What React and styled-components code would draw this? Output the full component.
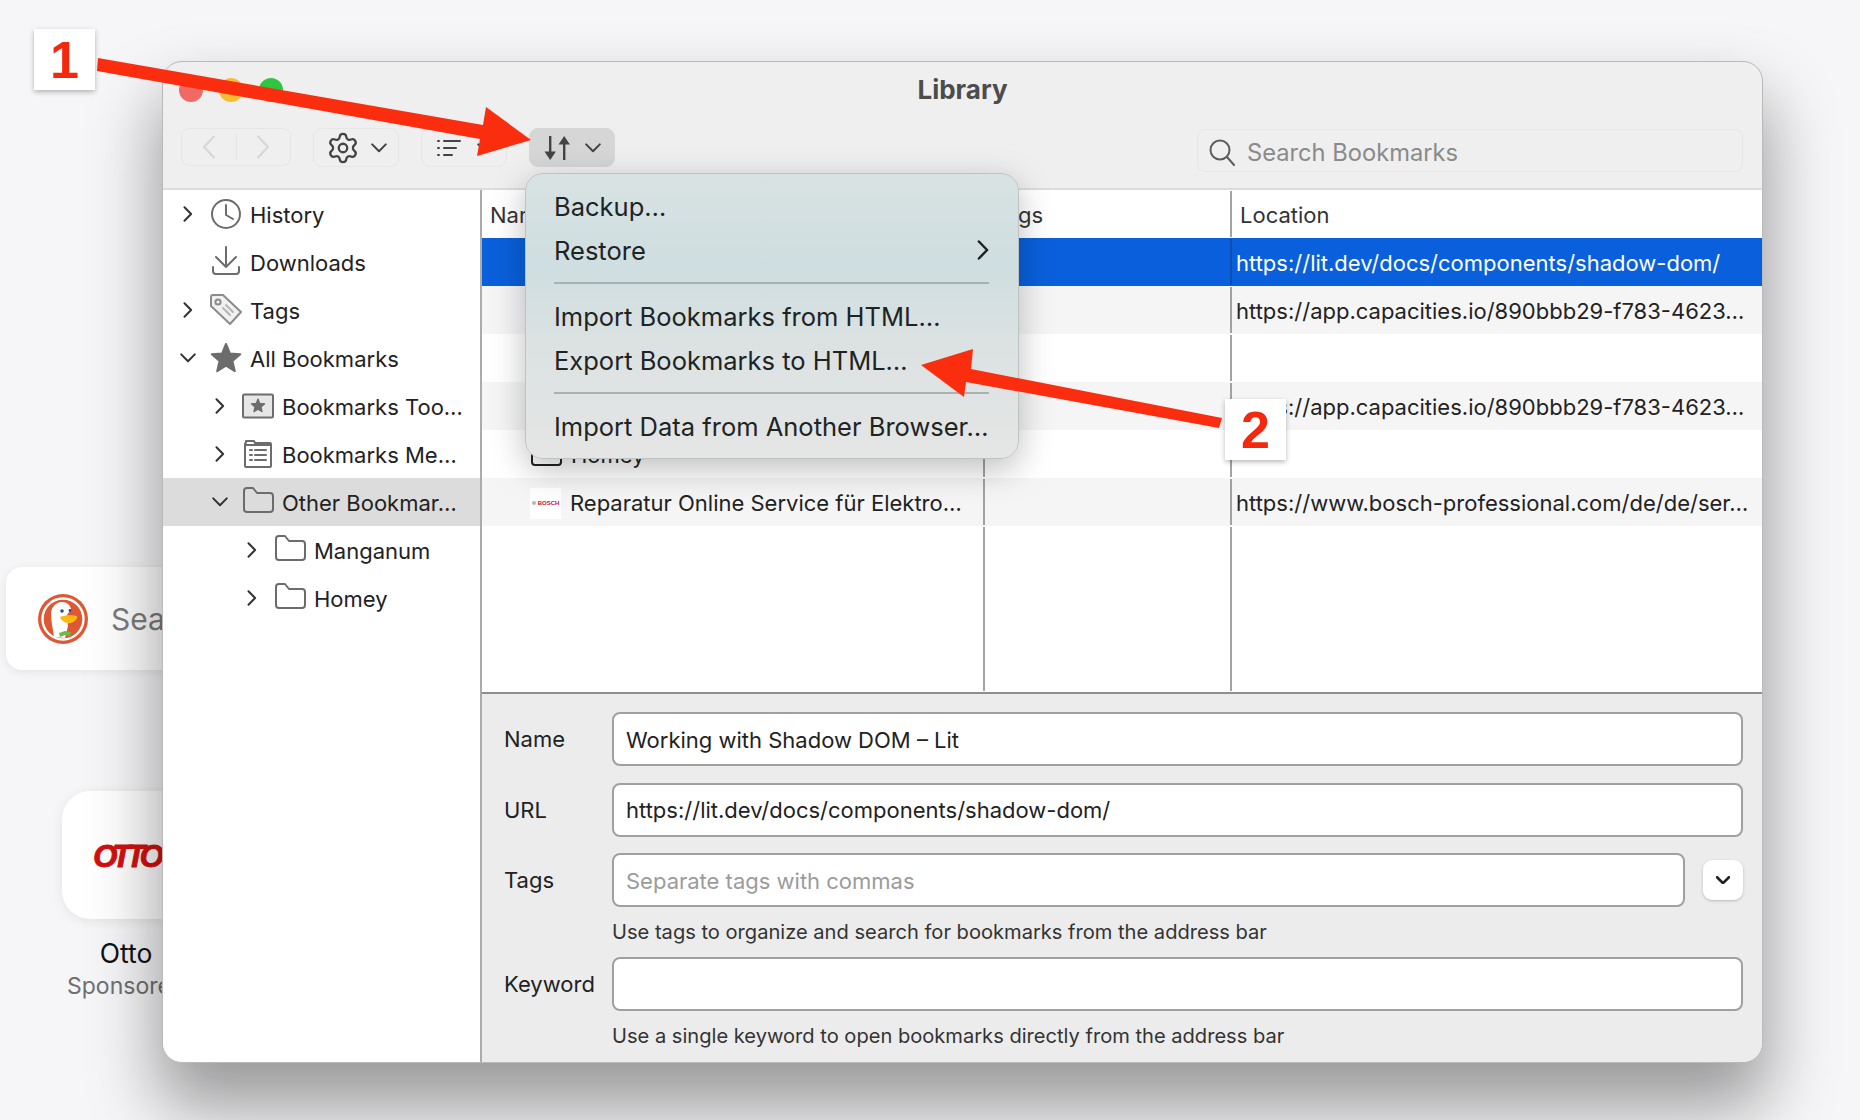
import React from "react"
import styled, { createGlobalStyle } from "styled-components"
import { Settings } from "lucide-react"

const GlobalStyle = createGlobalStyle`
	html, body {
		margin: 0;
		padding: 0;
		background: #f6f6f8;
	}
	* {
		box-sizing: border-box;
	}
`

const Desktop = styled.div`
	position: relative;
	width: 1860px;
	height: 1120px;
	overflow: hidden;
	background: #f6f6f8;
	font-family: Inter, "Liberation Sans", sans-serif;
	color: #222;
`

const Backdrop = styled.div`
	display: flex;
	flex-direction: column;
	align-items: flex-start;
	padding: 567px 0 0 6px;
`

const SearchCard = styled.div`
	display: flex;
	align-items: center;
	gap: 23px;
	width: 600px;
	height: 103px;
	padding-left: 32px;
	border-radius: 16px;
	background: #fff;
	box-shadow: 0 2px 10px rgba(0, 0, 0, 0.08);
	font-size: 30px;
	color: #7c7c7c;
`

const TileGroup = styled.div`
	display: flex;
	flex-direction: column;
	align-items: center;
	width: 128px;
	margin: 121px 0 0 56px;
`

const Tile = styled.div`
	display: flex;
	align-items: center;
	justify-content: center;
	width: 128px;
	height: 128px;
	padding-top: 4px;
	border-radius: 28px;
	background: #fff;
	box-shadow: 0 2px 12px rgba(0, 0, 0, 0.08);
`

const OttoLogo = styled.span`
	font-family: "Liberation Sans", sans-serif;
	font-size: 31px;
	font-weight: 700;
	font-style: italic;
	letter-spacing: -5px;
	color: #d3100f;
	-webkit-text-stroke: 1px #d3100f;
`

const TileName = styled.div`
	margin-top: 19px;
	font-size: 26.5px;
	line-height: 30px;
	color: #111;
`

const TileNote = styled.div`
	margin-top: 3px;
	font-size: 23px;
	line-height: 30px;
	color: #707070;
	white-space: nowrap;
`

const Window = styled.div`
	position: absolute;
	left: 162px;
	top: 61px;
	display: flex;
	flex-direction: column;
	width: 1601px;
	height: 1002px;
	border: 1px solid #b9b9b9;
	border-radius: 20px;
	background: #efefef;
	box-shadow: 0 40px 68px 4px rgba(0, 0, 0, 0.38);
`

const Clip = styled.div`
	display: flex;
	flex-direction: column;
	flex: 1;
	min-height: 0;
	overflow: hidden;
	border-radius: 19px;
`

const TitleRow = styled.div`
	display: grid;
	grid-template-columns: 1fr auto 1fr;
	align-items: center;
	height: 55px;
	padding: 0 16px;
`

const Lights = styled.div`
	display: flex;
	gap: 16px;
`

const Light = styled.span`
	width: 24px;
	height: 24px;
	border-radius: 50%;
	background: ${(p) => p.$color};
`

const Title = styled.div`
	font-size: 26px;
	font-weight: 700;
	color: #4c4c4c;
`

const Toolbar = styled.div`
	display: flex;
	align-items: flex-start;
	gap: 22px;
	height: 73px;
	padding: 11px 19px 0 18px;
	border-bottom: 2px solid #dcdcdc;
`

const NavGroup = styled.div`
	display: flex;
	align-items: center;
	width: 110px;
	height: 38px;
	border: 1px solid #e6e6e6;
	border-radius: 8px;
`

const NavHalf = styled.div`
	display: flex;
	align-items: center;
	justify-content: center;
	flex: 1;
	height: 26px;
	border-left: ${(p) => (p.$divided ? "1px solid #e4e4e4" : "none")};
`

const FlipX = styled.span`
	display: flex;
	transform: scaleX(-1);
`

const ToolButton = styled.div`
	display: flex;
	align-items: center;
	justify-content: center;
	gap: ${(p) => p.$gap}px;
	width: 86px;
	height: 39px;
	padding-top: 1px;
	border: 1px solid ${(p) => (p.$active ? "#d6d6d6" : "#e6e6e6")};
	border-radius: 9px;
	background: ${(p) => (p.$active ? "#d6d6d6" : "transparent")};
	color: #444;
`

const SearchBox = styled.div`
	display: flex;
	align-items: center;
	gap: 11px;
	width: 546px;
	height: 43px;
	margin: 1px 0 0 auto;
	padding: 3px 0 0 10px;
	border: 1px solid #e6e6e6;
	border-radius: 8px;
	font-size: 23.7px;
	color: #8a8a8a;
`

const Body = styled.div`
	display: flex;
	flex: 1;
	min-height: 0;
`

const Sidebar = styled.div`
	flex: none;
	width: 319px;
	border-right: 2px solid #ababab;
	background: #fff;
`

const TreeRow = styled.div`
	display: flex;
	align-items: center;
	height: 48px;
	padding-left: ${(p) => 16 + p.$level * 32}px;
	background: ${(p) => (p.$selected ? "#dcdcdc" : "transparent")};
	font-size: 22px;
	white-space: nowrap;
`

const TreeLabel = styled.span`
	padding-top: 2px;
`

const Twisty = styled.span`
	display: flex;
	align-items: center;
	justify-content: center;
	flex: none;
	width: 18px;
	height: 18px;
	margin-right: 13px;
	color: #333;
`

const IconSlot = styled.span`
	display: flex;
	flex: none;
	width: 32px;
	height: 32px;
	margin-right: 8px;
	color: #6c6c6c;
`

const Main = styled.div`
	display: flex;
	flex-direction: column;
	flex: 1;
	min-width: 0;
`

const Table = styled.div`
	display: flex;
	flex-direction: column;
	flex: 1;
	min-height: 0;
	background: #fff;
	border-bottom: 2px solid #8e8e8e;
`

const Row = styled.div`
	display: grid;
	grid-template-columns: 501px 247px 1fr;
	flex: ${(p) => (p.$fill ? 1 : "none")};
	height: ${(p) => (p.$fill ? "auto" : "48px")};
	background: ${(p) => (p.$selected ? "#0a60dc" : p.$striped ? "#f5f5f5" : "#fff")};
	color: ${(p) => (p.$selected ? "#fff" : "#222")};
	font-size: 22px;
`

const Cell = styled.div`
	display: flex;
	align-items: center;
	gap: 9px;
	min-width: 0;
	margin: 1px 0;
	padding: 2px 0 0 ${(p) => p.$inset || 4}px;
	border-left: ${(p) => (p.$first ? "none" : `2px solid ${p.$selected ? "#0c4fb0" : "#a3a3a3"}`)};
	white-space: nowrap;
`

const HeadCell = styled(Cell)`
	color: #333;
`

const Favicon = styled.span`
	display: flex;
	align-items: center;
	justify-content: center;
	gap: 2px;
	flex: none;
	width: 31px;
	height: 31px;
	background: #fff;
	font-family: "Liberation Sans", sans-serif;
	font-size: 6px;
	font-weight: 700;
	color: #c8102e;
`

const FaviconDot = styled.i`
	width: 4px;
	height: 4px;
	border-radius: 50%;
	background: #b5b5b5;
`

const Details = styled.div`
	flex: none;
	height: 368px;
	padding: 18px 19px 0 22px;
	background: #ececec;
`

const FieldRow = styled.div`
	display: flex;
	align-items: center;
	margin-bottom: ${(p) => (p.$tight ? 0 : 16.5)}px;
`

const FieldLabel = styled.div`
	flex: none;
	width: 108px;
	font-size: 22px;
	color: #222;
`

const Field = styled.div`
	display: flex;
	align-items: center;
	flex: 1;
	height: 54px;
	padding: 1px 0 0 12px;
	border: 2px solid #a0a0a0;
	border-radius: 8px;
	background: #fff;
	font-size: 22px;
	color: ${(p) => (p.$placeholder ? "#9b9b9b" : "#222")};
`

const DropButton = styled.div`
	display: flex;
	align-items: center;
	justify-content: center;
	flex: none;
	width: 40px;
	height: 40px;
	margin-left: 18px;
	border-radius: 9px;
	background: #fff;
	box-shadow: 0 1px 3px rgba(0, 0, 0, 0.22);
`

const Hint = styled.div`
	height: 50px;
	padding-left: 108px;
	font-size: 20.1px;
	line-height: 51px;
	color: #333;
`

const Menu = styled.div`
	position: absolute;
	left: 362px;
	top: 111px;
	width: 494px;
	height: 286px;
	padding: 11px 29px 0 28px;
	border: 1px solid #bdc3c3;
	border-radius: 18px;
	background: linear-gradient(180deg, #d8e2e2 0%, #cfdee0 32%, #dce2e2 62%, #e5e5e5 100%);
	box-shadow: 0 10px 34px rgba(0, 0, 0, 0.26);
`

const MenuItem = styled.div`
	display: flex;
	align-items: center;
	justify-content: space-between;
	height: 44px;
	padding-bottom: 2px;
	font-size: 25.5px;
	color: #1e2424;
	white-space: nowrap;
`

const MenuRule = styled.div`
	height: 2px;
	margin: 9px 0 11px;
	background: #a9b2b2;
`

const ArrowLayer = styled.svg`
	position: absolute;
	left: 0;
	top: 0;
	pointer-events: none;
`

const Badge = styled.div`
	position: absolute;
	left: ${(p) => p.$x}px;
	top: ${(p) => p.$y}px;
	display: flex;
	align-items: center;
	justify-content: center;
	width: 61px;
	height: 61px;
	background: #fff;
	box-shadow: 0 2px 5px rgba(0, 0, 0, 0.28);
	font-family: "Liberation Sans", sans-serif;
	font-size: 52px;
	font-weight: 700;
	color: #f4280f;
`

const ChevronRight = ({ color = "currentColor", h = 16 }) => (
	<svg width={h * 0.6} height={h} viewBox="0 0 9 16" fill="none" stroke={color} strokeWidth="2" strokeLinecap="round" strokeLinejoin="round">
		<path d="M1.2 1.2 7.8 8l-6.6 6.8" />
	</svg>
)

const ChevronLeft = ({ color }) => (
	<svg width="14" height="24" viewBox="0 0 14 24" fill="none" stroke={color} strokeWidth="2" strokeLinecap="round" strokeLinejoin="round">
		<path d="M12 1.5 2 12l10 10.5" />
	</svg>
)

const ChevronDown = ({ w = 16, weight = 2 }) => (
	<svg width={w} height={w * 0.6} viewBox="0 0 16 9.6" fill="none" stroke="currentColor" strokeWidth={weight} strokeLinecap="round" strokeLinejoin="round">
		<path d="M1.2 1.4 8 8.2l6.8-6.8" />
	</svg>
)

const Glyph = ({ children, fill = "none" }) => (
	<svg width="32" height="32" viewBox="0 0 32 32" fill={fill} stroke="currentColor" strokeWidth="2" strokeLinecap="round" strokeLinejoin="round">
		{children}
	</svg>
)

const starPoints = (cx, cy, R) => {
	const pts = []
	for (let i = 0; i < 10; i++) {
		const r = i % 2 ? R * 0.45 : R
		const a = (Math.PI / 5) * i - Math.PI / 2
		pts.push(`${(cx + r * Math.cos(a)).toFixed(2)},${(cy + r * Math.sin(a)).toFixed(2)}`)
	}
	return pts.join(" ")
}

const ClockIcon = () => (
	<Glyph>
		<circle cx="16" cy="16" r="14" />
		<path d="M16 7v10l7 4" />
	</Glyph>
)

const DownloadIcon = () => (
	<Glyph>
		<path d="M16 1v20M6 11l10 10 10-10" />
		<path d="M3 21v4a3 3 0 0 0 3 3h20a3 3 0 0 0 3-3v-4" />
	</Glyph>
)

const TagIcon = () => (
	<svg width="32" height="32" viewBox="0 0 32 32" fill="#f1f1f1" stroke="#8b8b8b" strokeWidth="2" strokeLinejoin="round" strokeLinecap="round">
		<path d="M3 1h10l18 17-11 12L1 12V3a2 2 0 0 1 2-2Z" />
		<circle cx="8" cy="8" r="2.6" />
		<path d="M13 14l7 7M16 11l7 7" stroke="#b5b5b5" />
	</svg>
)

const StarIcon = () => (
	<Glyph fill="currentColor">
		<polygon points={starPoints(16, 17, 15)} />
	</Glyph>
)

const ToolbarBoxIcon = () => (
	<Glyph>
		<rect x="1" y="4.5" width="30" height="23" rx="1.5" fill="#e6e6e6" />
		<polygon points={starPoints(16, 16, 7)} fill="currentColor" stroke="currentColor" strokeWidth="1.2" />
	</Glyph>
)

const MenuBoxIcon = () => (
	<Glyph>
		<path d="M4 5V3h8l1 2h15a1 1 0 0 1 1 1v22a1 1 0 0 1-1 1H4a1 1 0 0 1-1-1V6a1 1 0 0 1 1-1Z" />
		<path d="M3 7h26" />
		<path d="M8 12h2M13 12h11M8 17h2M13 17h11M8 22h2M13 22h11" />
	</Glyph>
)

const FolderIcon = () => (
	<Glyph>
		<path d="M2 7V5a3 3 0 0 1 3-3h6l4 5h13a3 3 0 0 1 3 3v13a3 3 0 0 1-3 3H5a3 3 0 0 1-3-3Z" />
	</Glyph>
)

const ListIcon = () => (
	<svg width="26" height="18" viewBox="0 0 26 18" fill="none" stroke="currentColor" strokeWidth="2" strokeLinecap="round">
		<path d="M2 2h1M8 2h16M2 9h1M8 9h12M2 16h1M8 16h8" />
	</svg>
)

const SortIcon = () => (
	<svg width="26" height="26" viewBox="0 0 26 26" fill="currentColor">
		<path d="M5 1h2.4v17H5Z" />
		<path d="M0.5 16.5h11.4L6.2 25Z" />
		<path d="M19 8h2.4v17H19Z" />
		<path d="M14.5 9.5h11.4L20.2 1Z" />
	</svg>
)

const SearchGlyph = () => (
	<svg width="28" height="28" viewBox="0 0 28 28" fill="none" stroke="#5d5d5d" strokeWidth="2" strokeLinecap="round">
		<circle cx="12" cy="12" r="9.5" />
		<path d="M19 19l7 8" />
	</svg>
)

const DuckLogo = () => (
	<svg width="50" height="50" viewBox="0 0 50 50">
		<circle cx="25" cy="25" r="25" fill="#de5833" />
		<circle cx="25" cy="25" r="20.5" fill="none" stroke="#fff" strokeWidth="2.4" />
		<path d="M16 43c-1-8-3-16-3-23 0-7 5-12 11-12 5 0 8 3 9 7l-4 6 1 11-3 12Z" fill="#fff" />
		<circle cx="24" cy="17" r="1.8" fill="#2d4f8e" />
		<circle cx="32" cy="16.5" r="1.4" fill="#2d4f8e" />
		<path d="M22 23c4-2 12-2 17-1 1 3-3 6-6 7-4 1-10-2-11-6Z" fill="#fdb813" />
		<path d="M21 39l6-2 6 1-1 4-5-1-5 2Z" fill="#67bd47" />
	</svg>
)

const tree = [
	{ level: 0, open: false, icon: <ClockIcon />, label: "History" },
	{ level: 0, icon: <DownloadIcon />, label: "Downloads" },
	{ level: 0, open: false, icon: <TagIcon />, label: "Tags" },
	{ level: 0, open: true, icon: <StarIcon />, label: "All Bookmarks" },
	{ level: 1, open: false, icon: <ToolbarBoxIcon />, label: "Bookmarks Too…" },
	{ level: 1, open: false, icon: <MenuBoxIcon />, label: "Bookmarks Me…" },
	{ level: 1, open: true, icon: <FolderIcon />, label: "Other Bookmar…", selected: true },
	{ level: 2, open: false, icon: <FolderIcon />, label: "Manganum" },
	{ level: 2, open: false, icon: <FolderIcon />, label: "Homey" },
]

const capacities = "https://app.capacities.io/890bbb29-f783-4623…"

const rows = [
	{ location: "https://lit.dev/docs/components/shadow-dom/", name: "Working with Shadow DOM – Lit", selected: true },
	{ location: capacities, striped: true },
	{},
	{ location: capacities, striped: true },
	{ name: "Homey", icon: <FolderIcon /> },
	{
		name: "Reparatur Online Service für Elektro…",
		location: "https://www.bosch-professional.com/de/de/ser…",
		striped: true,
		icon: (
			<Favicon>
				<FaviconDot />
				BOSCH
			</Favicon>
		),
	},
]

const App = () => (
	<Desktop>
		<GlobalStyle />
		<Backdrop>
			<SearchCard>
				<DuckLogo />
				Search
			</SearchCard>
			<TileGroup>
				<Tile>
					<OttoLogo>OTTO</OttoLogo>
				</Tile>
				<TileName>Otto</TileName>
				<TileNote>Sponsored</TileNote>
			</TileGroup>
		</Backdrop>

		<Window>
			<Clip>
				<TitleRow>
					<Lights>
						<Light $color="#ef6a64" />
						<Light $color="#f5bd30" />
						<Light $color="#2fc640" />
					</Lights>
					<Title>Library</Title>
				</TitleRow>
				<Toolbar>
					<NavGroup>
						<NavHalf>
							<ChevronLeft color="#d6d6d6" />
						</NavHalf>
						<NavHalf $divided>
							<FlipX>
								<ChevronLeft color="#d6d6d6" />
							</FlipX>
						</NavHalf>
					</NavGroup>
					<ToolButton $gap={11}>
						<Settings size={34} strokeWidth={1.6} />
						<ChevronDown />
					</ToolButton>
					<ToolButton $gap={15}>
						<ListIcon />
						<ChevronDown />
					</ToolButton>
					<ToolButton $active $gap={15}>
						<SortIcon />
						<ChevronDown />
					</ToolButton>
					<SearchBox>
						<SearchGlyph />
						Search Bookmarks
					</SearchBox>
				</Toolbar>
				<Body>
					<Sidebar>
						{tree.map((item) => (
							<TreeRow key={item.label} $level={item.level} $selected={item.selected}>
								<Twisty>
									{item.open === true && <ChevronDown />}
									{item.open === false && <ChevronRight />}
								</Twisty>
								<IconSlot>{item.icon}</IconSlot>
								<TreeLabel>{item.label}</TreeLabel>
							</TreeRow>
						))}
					</Sidebar>
					<Main>
						<Table>
							<Row>
								<HeadCell $first $inset={8}>Name</HeadCell>
								<HeadCell $inset={8}>Tags</HeadCell>
								<HeadCell $inset={8}>Location</HeadCell>
							</Row>
							{rows.map((row, i) => (
								<Row key={i} $selected={row.selected} $striped={row.striped}>
									<Cell $first $inset={row.icon ? 48 : 88}>
										{row.icon}
										{row.name}
									</Cell>
									<Cell $selected={row.selected} />
									<Cell $selected={row.selected}>{row.location}</Cell>
								</Row>
							))}
							<Row $fill>
								<Cell $first />
								<Cell />
								<Cell />
							</Row>
						</Table>
						<Details>
							<FieldRow>
								<FieldLabel>Name</FieldLabel>
								<Field>Working with Shadow DOM – Lit</Field>
							</FieldRow>
							<FieldRow>
								<FieldLabel>URL</FieldLabel>
								<Field>https://lit.dev/docs/components/shadow-dom/</Field>
							</FieldRow>
							<FieldRow $tight>
								<FieldLabel>Tags</FieldLabel>
								<Field $placeholder>Separate tags with commas</Field>
								<DropButton>
									<ChevronDown w={14} weight={3} />
								</DropButton>
							</FieldRow>
							<Hint>Use tags to organize and search for bookmarks from the address bar</Hint>
							<FieldRow $tight>
								<FieldLabel>Keyword</FieldLabel>
								<Field />
							</FieldRow>
							<Hint>Use a single keyword to open bookmarks directly from the address bar</Hint>
						</Details>
					</Main>
				</Body>
			</Clip>
			<Menu>
				<MenuItem>Backup…</MenuItem>
				<MenuItem>
					Restore
					<ChevronRight h={20} />
				</MenuItem>
				<MenuRule />
				<MenuItem>Import Bookmarks from HTML…</MenuItem>
				<MenuItem>Export Bookmarks to HTML…</MenuItem>
				<MenuRule />
				<MenuItem>Import Data from Another Browser…</MenuItem>
			</Menu>
		</Window>

		<ArrowLayer width="1860" height="1120" viewBox="0 0 1860 1120">
			<polygon fill="#fa2d0e" points="98,58 483,125 486,107 531,140 477,156 480,139 97,71" />
			<polygon fill="#fa2d0e" points="1222,418 971,369 973,349 921,365 964,397 966,382 1219,428" />
		</ArrowLayer>
		<Badge $x={34} $y={29}>1</Badge>
		<Badge $x={1225} $y={399}>2</Badge>
	</Desktop>
)

export default App
